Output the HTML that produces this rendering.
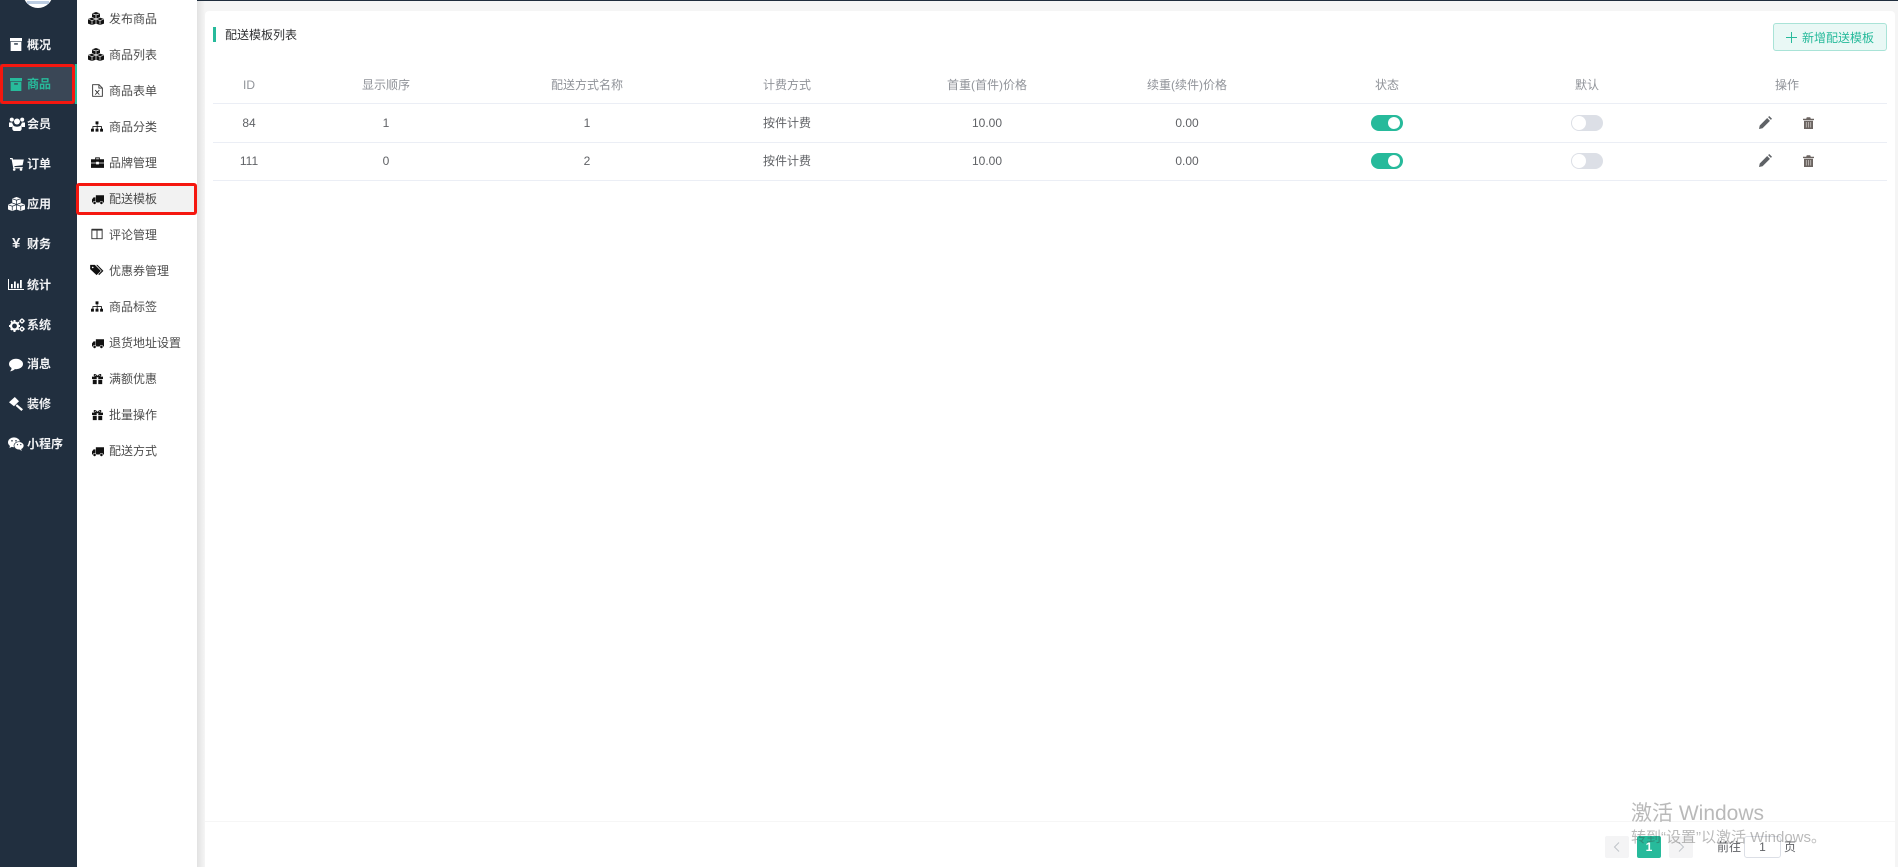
<!DOCTYPE html>
<html lang="zh-CN">
<head>
<meta charset="utf-8">
<title>配送模板列表</title>
<style>
*{box-sizing:border-box}
html,body{margin:0;padding:0;width:1898px;height:867px;overflow:hidden;background:#f5f5f5}
body{position:relative;font-family:"Liberation Sans","Noto Sans CJK SC",sans-serif;font-size:12px;color:#606266}
.abs,.t,.m,.s,.c,.ic{position:absolute}
.topline{position:absolute;left:0;top:0;width:1898px;height:1px;background:#1f2d3d}
.side{position:absolute;left:0;top:0;width:77px;height:867px;background:#212f3f;overflow:hidden;--l:#212f3f}
.logo{position:absolute;left:23px;top:-22px;width:30px;height:30px;border-radius:50%;background:#fff}
.logo i{position:absolute;left:4px;top:23px;width:22px;height:3px;background:#9fb8d6;opacity:.7}
.activeitem{position:absolute;left:0;top:64px;width:77px;height:40px;background:#3a4756;border-right:2px solid #27ba9b}
.m{left:27px;width:46px;height:20px;line-height:20px;color:#f2f3f5;font-weight:bold;white-space:nowrap}
.sub{position:absolute;left:77px;top:0;width:120px;height:867px;background:#fff}
.subactive{position:absolute;left:77px;top:184px;width:120px;height:31px;background:#f2f2f2}
.s{left:109px;height:20px;line-height:20px;color:#4d4d4d;white-space:nowrap}
.shadow{position:absolute;left:197px;top:0;width:8px;height:867px;background:linear-gradient(to right,#e2e2e2,#f5f5f5)}
.card{position:absolute;left:205px;top:11px;width:1690px;height:856px;background:#fff;border-radius:4px 4px 0 0}
.bar{position:absolute;left:213px;top:27px;width:3px;height:15px;background:#27ba9b}
.title{position:absolute;left:225px;top:25px;line-height:20px;color:#303133;white-space:nowrap}
.btn{position:absolute;left:1773px;top:23px;width:114px;height:28px;background:#e9f8f5;border:1px solid #a9e3d7;border-radius:3px;color:#27ba9b;line-height:28px;white-space:nowrap}
.btn span{position:absolute;left:28px;top:0}
.btn b{position:absolute;font-weight:normal;background:#27ba9b}
.line{position:absolute;left:213px;width:1674px;height:1px;background:#ebeef5}
.c{width:160px;margin-left:-80px;text-align:center;height:20px;line-height:20px;white-space:nowrap}
.h{color:#909399}
.sw{position:absolute;width:32px;height:16px;border-radius:8px;background:#27ba9b}
.sw i{position:absolute;left:17px;top:2px;width:12px;height:12px;border-radius:50%;background:#fff}
.sw.off{background:#dcdfe6}
.sw.off i{left:1px;top:1px;width:14px;height:14px}
.foot{position:absolute;left:205px;top:821px;width:1690px;height:1px;background:#f6f6f6}
.pg{position:absolute;top:836px;width:24px;height:22px;background:#f4f4f5;border-radius:2px;text-align:center}
.pg.on{background:#27ba9b;color:#fff;font-weight:bold;line-height:22px}
.ptxt{position:absolute;top:837px;line-height:20px;color:#606266}
.pin{position:absolute;left:1744px;top:836px;width:37px;height:22px;border:1px solid #dcdfe6;border-radius:3px;background:#fff;text-align:center;line-height:20px;color:#606266}
.wm{position:absolute;left:1631px;color:rgba(60,60,60,.36);white-space:nowrap}
svg.ic{display:block;overflow:visible}
.red{position:absolute;border:3px solid #f5170f;border-radius:3px}
</style>
</head>
<body>
<svg width="0" height="0" style="position:absolute">
<defs>
<symbol id="archive" viewBox="0 0 13 13" preserveAspectRatio="none"><path d="M0 0h13v3.200H0zM.7 3.900h11.600V13H.7zM4.500 5.300v1.300h4V5.300z" fill-rule="evenodd" fill="currentColor"/></symbol>
<symbol id="cubes" viewBox="0 0 16 14" preserveAspectRatio="none"><path d="M8 0l4 1.500v5L8 8 4 6.500v-5zM4 6l4 1.500v5L4 14 0 12.500v-5zM12 6l4 1.500v5L12 14l-4-1.500v-5z" fill="currentColor"/><path d="M4.300 1.800L8 3.200l3.700-1.400M.3 7.800L4 9.200l3.700-1.400M8.300 7.800L12 9.200l3.700-1.400M8 3.200V7M4 9.200v4.300M12 9.200v4.300M4 6l4 1.500L12 6M8 7.500v5" stroke="var(--l,#fff)" stroke-width=".7" fill="none"/></symbol>
<symbol id="users" viewBox="0 0 16 14"><circle cx="8" cy="4.500" r="3" fill="currentColor"/><circle cx="2.800" cy="2.600" r="2" fill="currentColor"/><circle cx="13.200" cy="2.600" r="2" fill="currentColor"/><path d="M0 5.500h3.200c.1 1.300.7 2.200 1.500 2.900C3.700 9 3 10 3 10H0zM16 5.500h-3.200c-.1 1.300-.7 2.200-1.500 2.900 1 .6 1.700 1.600 1.700 1.600h3zM4 8.500c1 .8 2.600 1.200 4 1.200s3-.4 4-1.200c.5.800.7 1.700.7 3 0 1.400-1 2.500-2 2.500H5.300c-1 0-2-1.100-2-2.500 0-1.300.2-2.200.7-3z" fill="currentColor"/></symbol>
<symbol id="cart" viewBox="0 0 14 14"><path d="M0 1h2.600l.4 1.500h10.800l-1.200 5.700-8.300.9.300 1h8.200v1.300H3.300L1.600 2.300H0z" fill="currentColor"/><circle cx="4.200" cy="12.500" r="1.300" fill="currentColor"/><circle cx="11" cy="12.500" r="1.300" fill="currentColor"/></symbol>
<symbol id="chart" viewBox="0 0 16 11" preserveAspectRatio="none"><path d="M0 0h1v10h15v1H0z" fill="currentColor"/><path d="M3 5h1.800v4.200H3zM6 2.500h1.800v6.700H6zM9 4.500h1.800v4.700H9zM12 1h1.800v8.200H12z" fill="currentColor"/></symbol>
<symbol id="cogs" viewBox="0 0 16 14"><circle cx="5.500" cy="8" r="3.500" fill="none" stroke="currentColor" stroke-width="2.200"/><path d="M4.500 2h2v2h-2zM4.500 12h2v2h-2zM0 7h2v2H0zM9 7h2v2H9zM1.300 3.300l1.500-.9 1 1.500-1.500 1zM8 11l1.500-1 1 1.400-1.500 1zM1.200 11.500l1-1.500 1.500 1-1 1.500zM8 5l1-1.500 1.500 1-1 1.500z" fill="currentColor"/><circle cx="13" cy="3" r="1.600" fill="none" stroke="currentColor" stroke-width="1.300"/><circle cx="13" cy="11" r="1.600" fill="none" stroke="currentColor" stroke-width="1.300"/><path d="M12.500.3h1v1h-1zM12.500 4.800h1v1h-1zM15 2.500h1v1h-1zM10 2.500h1v1h-1zM12.500 8.300h1v1h-1zM12.500 12.800h1v1h-1zM15 10.500h1v1h-1zM10 10.500h1v1h-1z" fill="currentColor"/></symbol>
<symbol id="comment" viewBox="0 0 14 14"><ellipse cx="7" cy="6" rx="7" ry="5.200" fill="currentColor"/><path d="M2.500 9.500c.2 1.700-.6 3-1.600 3.800 2-.2 3.700-1 5-2.200z" fill="currentColor"/></symbol>
<symbol id="gavel" viewBox="0 0 14 14"><path d="M5.800 0L10 4.200 5 9.300 0 5.200z" fill="currentColor"/><path d="M8 7.300l6 5-1.600 1.700L6.600 8.900z" fill="currentColor"/></symbol>
<symbol id="wechat" viewBox="0 0 16 14"><ellipse cx="6" cy="5.300" rx="6" ry="4.900" fill="currentColor"/><ellipse cx="11" cy="8.800" rx="5" ry="4.100" fill="currentColor" stroke="#212f3f" stroke-width=".7"/><path d="M2 8.500L1.500 11 4 9.800zM13 12l1 1.800-2.500-1z" fill="currentColor"/><circle cx="4" cy="3.800" r=".8" fill="#212f3f"/><circle cx="8" cy="3.800" r=".8" fill="#212f3f"/><circle cx="9.500" cy="7.600" r=".6" fill="#212f3f"/><circle cx="12.800" cy="7.600" r=".6" fill="#212f3f"/></symbol>
<symbol id="file" viewBox="0 0 12 14"><path d="M.7.700h7l3.600 3.600v9H.7z" fill="none" stroke="currentColor" stroke-width="1"/><path d="M7.500.7v3.600h3.800" fill="none" stroke="currentColor" stroke-width=".9"/><path d="M3.500 6.500l4.500 5M8 6.500l-4.500 5" stroke="currentColor" stroke-width="1" fill="none"/></symbol>
<symbol id="sitemap" viewBox="0 0 14 14"><path d="M5.300 1h3.400v3.400H5.300zM0 9.600h3.400V13H0zM5.300 9.600h3.400V13H5.300zM10.600 9.600H14V13h-3.400zM6.500 4.400h1v2.200h5.200v3h-1V7.600h-4v2h-1v-2h-4v2h-1v-3h5.300z" fill="currentColor"/></symbol>
<symbol id="brief" viewBox="0 0 14 14"><path d="M0 3.500h14v3.700H8.500v-1h-3v1H0zM0 8h5.500v1h3V8H14v4.800H0zM4.500 3.500V1.500h5v2H8.500v-1h-3v1z" fill="currentColor"/></symbol>
<symbol id="truck" viewBox="0 0 14 12"><path d="M4.500 1h9.500v8.500H4.500zM4 3.500H1.800L0 6v3.500h4z" fill="currentColor"/><circle cx="3" cy="10" r="1.800" fill="currentColor" stroke="#fff" stroke-width=".6"/><circle cx="11" cy="10" r="1.800" fill="currentColor" stroke="#fff" stroke-width=".6"/></symbol>
<symbol id="cols" viewBox="0 0 14 14"><path d="M1 1.500h12v11H1zM7 1.500v11" fill="none" stroke="currentColor" stroke-width="1.100"/><path d="M1 1h12v2H1z" fill="currentColor"/></symbol>
<symbol id="tags" viewBox="0 0 16 14"><path d="M0 1h5.500l7 7-5 5L0 6z" fill="currentColor"/><path d="M7 1h1.500l7 7-5 5-1-1 4-4z" fill="currentColor"/><circle cx="3" cy="4" r="1" fill="#fff"/></symbol>
<symbol id="gift" viewBox="0 0 14 14"><path d="M0 4h14v3H8V4.500H6V7H0zM1 8h5v5.500H1zM8 8h5v5.500H8z" fill="currentColor"/><path d="M7 4C5 1 2.500.5 2.800 2.300 3 3.500 5 4 7 4c2 0 4-.5 4.200-1.700C11.500.5 9 1 7 4z" fill="none" stroke="currentColor" stroke-width="1.300"/></symbol>
<symbol id="pencil" viewBox="0 0 14 14"><path d="M0 14l.8-3.800 8-8 3 3-8 8zM9.800 1.200L11 0l3 3-1.200 1.200z" fill="currentColor"/></symbol>
<symbol id="trash" viewBox="0 0 11 12"><path d="M0 1.800h3.200L3.800.3h3.400l.6 1.500H11v1.300H0zM1 3.800h9V12H1z" fill="currentColor"/><path d="M3.300 5v5.500M5.500 5v5.500M7.700 5v5.500" stroke="#c9c4c0" stroke-width=".8"/></symbol>
</defs>
</svg>

<div class="shadow"></div>
<div class="card"></div>
<div class="topline"></div>

<div class="side">
  <div class="logo"><i></i></div>
  <div class="activeitem"></div>
  <svg class="ic" style="left:10px;top:38px;width:12px;height:13px;color:#fff"><use href="#archive"/></svg>
  <div class="m" style="top:35px">概况</div>
  <svg class="ic" style="left:10px;top:78px;width:12px;height:13px;color:#27ba9b"><use href="#archive"/></svg>
  <div class="m" style="top:74px;color:#27ba9b">商品</div>
  <svg class="ic" style="left:9px;top:117px;width:16px;height:14px;color:#fff"><use href="#users"/></svg>
  <div class="m" style="top:114px">会员</div>
  <svg class="ic" style="left:10px;top:157px;width:14px;height:14px;color:#fff"><use href="#cart"/></svg>
  <div class="m" style="top:154px">订单</div>
  <svg class="ic" style="left:8px;top:197px;width:17px;height:14px;color:#fff"><use href="#cubes"/></svg>
  <div class="m" style="top:194px">应用</div>
  <div class="m" style="top:234px;left:12px;width:14px;font-size:15px">¥</div>
  <div class="m" style="top:234px">财务</div>
  <svg class="ic" style="left:8px;top:279px;width:16px;height:11px;color:#fff"><use href="#chart"/></svg>
  <div class="m" style="top:275px">统计</div>
  <svg class="ic" style="left:9px;top:318px;width:16px;height:14px;color:#fff"><use href="#cogs"/></svg>
  <div class="m" style="top:315px">系统</div>
  <svg class="ic" style="left:9px;top:358px;width:14px;height:14px;color:#fff"><use href="#comment"/></svg>
  <div class="m" style="top:354px">消息</div>
  <svg class="ic" style="left:9px;top:397px;width:14px;height:14px;color:#fff"><use href="#gavel"/></svg>
  <div class="m" style="top:394px">装修</div>
  <svg class="ic" style="left:8px;top:437px;width:16px;height:14px;color:#fff"><use href="#wechat"/></svg>
  <div class="m" style="top:434px">小程序</div>
</div>
<div class="red" style="left:0;top:64px;width:75px;height:40px"></div>

<div class="sub"></div>
<div class="subactive"></div>
<svg class="ic" style="left:88px;top:12px;width:16px;height:13px;color:#111"><use href="#cubes"/></svg>
<div class="s" style="top:9px">发布商品</div>
<svg class="ic" style="left:88px;top:48px;width:16px;height:13px;color:#111"><use href="#cubes"/></svg>
<div class="s" style="top:45px">商品列表</div>
<svg class="ic" style="left:92px;top:84px;width:11px;height:13px;color:#333"><use href="#file"/></svg>
<div class="s" style="top:81px">商品表单</div>
<svg class="ic" style="left:91px;top:120px;width:12px;height:13px;color:#111"><use href="#sitemap"/></svg>
<div class="s" style="top:117px">商品分类</div>
<svg class="ic" style="left:91px;top:156px;width:13px;height:13px;color:#111"><use href="#brief"/></svg>
<div class="s" style="top:153px">品牌管理</div>
<svg class="ic" style="left:92px;top:194px;width:12px;height:11px;color:#111"><use href="#truck"/></svg>
<div class="s" style="top:189px">配送模板</div>
<svg class="ic" style="left:91px;top:228px;width:12px;height:12px;color:#333"><use href="#cols"/></svg>
<div class="s" style="top:225px">评论管理</div>
<svg class="ic" style="left:90px;top:264px;width:14px;height:12px;color:#111"><use href="#tags"/></svg>
<div class="s" style="top:261px">优惠券管理</div>
<svg class="ic" style="left:91px;top:300px;width:12px;height:13px;color:#111"><use href="#sitemap"/></svg>
<div class="s" style="top:297px">商品标签</div>
<svg class="ic" style="left:92px;top:338px;width:12px;height:11px;color:#111"><use href="#truck"/></svg>
<div class="s" style="top:333px">退货地址设置</div>
<svg class="ic" style="left:92px;top:373px;width:11px;height:12px;color:#111"><use href="#gift"/></svg>
<div class="s" style="top:369px">满额优惠</div>
<svg class="ic" style="left:92px;top:409px;width:11px;height:12px;color:#111"><use href="#gift"/></svg>
<div class="s" style="top:405px">批量操作</div>
<svg class="ic" style="left:92px;top:446px;width:12px;height:11px;color:#111"><use href="#truck"/></svg>
<div class="s" style="top:441px">配送方式</div>
<div class="red" style="left:76px;top:183px;width:121px;height:32px"></div>

<div class="bar"></div>
<div class="title">配送模板列表</div>
<div class="btn"><b style="left:17px;top:8px;width:1px;height:11px"></b><b style="left:12px;top:13px;width:11px;height:1px"></b><span>新增配送模板</span></div>

<div class="c h" style="left:249px;top:75px">ID</div>
<div class="c h" style="left:386px;top:75px">显示顺序</div>
<div class="c h" style="left:587px;top:75px">配送方式名称</div>
<div class="c h" style="left:787px;top:75px">计费方式</div>
<div class="c h" style="left:987px;top:75px">首重(首件)价格</div>
<div class="c h" style="left:1187px;top:75px">续重(续件)价格</div>
<div class="c h" style="left:1387px;top:75px">状态</div>
<div class="c h" style="left:1587px;top:75px">默认</div>
<div class="c h" style="left:1787px;top:75px">操作</div>
<div class="line" style="top:103px"></div>

<div class="c" style="left:249px;top:113px">84</div>
<div class="c" style="left:386px;top:113px">1</div>
<div class="c" style="left:587px;top:113px">1</div>
<div class="c" style="left:787px;top:113px">按件计费</div>
<div class="c" style="left:987px;top:113px">10.00</div>
<div class="c" style="left:1187px;top:113px">0.00</div>
<div class="sw" style="left:1371px;top:115px"><i></i></div>
<div class="sw off" style="left:1571px;top:115px"><i></i></div>
<svg class="ic" style="left:1759px;top:116px;width:13px;height:13px;color:#5f6266"><use href="#pencil"/></svg>
<svg class="ic" style="left:1803px;top:117px;width:11px;height:12px;color:#6b6461"><use href="#trash"/></svg>
<div class="line" style="top:142px"></div>

<div class="c" style="left:249px;top:151px">111</div>
<div class="c" style="left:386px;top:151px">0</div>
<div class="c" style="left:587px;top:151px">2</div>
<div class="c" style="left:787px;top:151px">按件计费</div>
<div class="c" style="left:987px;top:151px">10.00</div>
<div class="c" style="left:1187px;top:151px">0.00</div>
<div class="sw" style="left:1371px;top:153px"><i></i></div>
<div class="sw off" style="left:1571px;top:153px"><i></i></div>
<svg class="ic" style="left:1759px;top:154px;width:13px;height:13px;color:#5f6266"><use href="#pencil"/></svg>
<svg class="ic" style="left:1803px;top:155px;width:11px;height:12px;color:#6b6461"><use href="#trash"/></svg>
<div class="line" style="top:180px"></div>

<div class="foot"></div>
<div class="pg" style="left:1605px"><svg style="position:absolute;left:8px;top:6px" width="7" height="10"><path d="M6 .5L1.500 5 6 9.500" fill="none" stroke="#bfc3c9" stroke-width="1"/></svg></div>
<div class="pg on" style="left:1637px">1</div>
<div class="pg" style="left:1669px"><svg style="position:absolute;left:9px;top:6px" width="7" height="10"><path d="M1 .5L5.500 5 1 9.500" fill="none" stroke="#bfc3c9" stroke-width="1"/></svg></div>
<div class="ptxt" style="left:1717px">前往</div>
<div class="pin">1</div>
<div class="ptxt" style="left:1784px">页</div>

<div class="wm" style="top:802px;font-size:21px;line-height:24px">激活 Windows</div>
<div class="wm" style="top:829px;font-size:15px;line-height:18px">转到“设置”以激活 Windows。</div>
</body>
</html>
